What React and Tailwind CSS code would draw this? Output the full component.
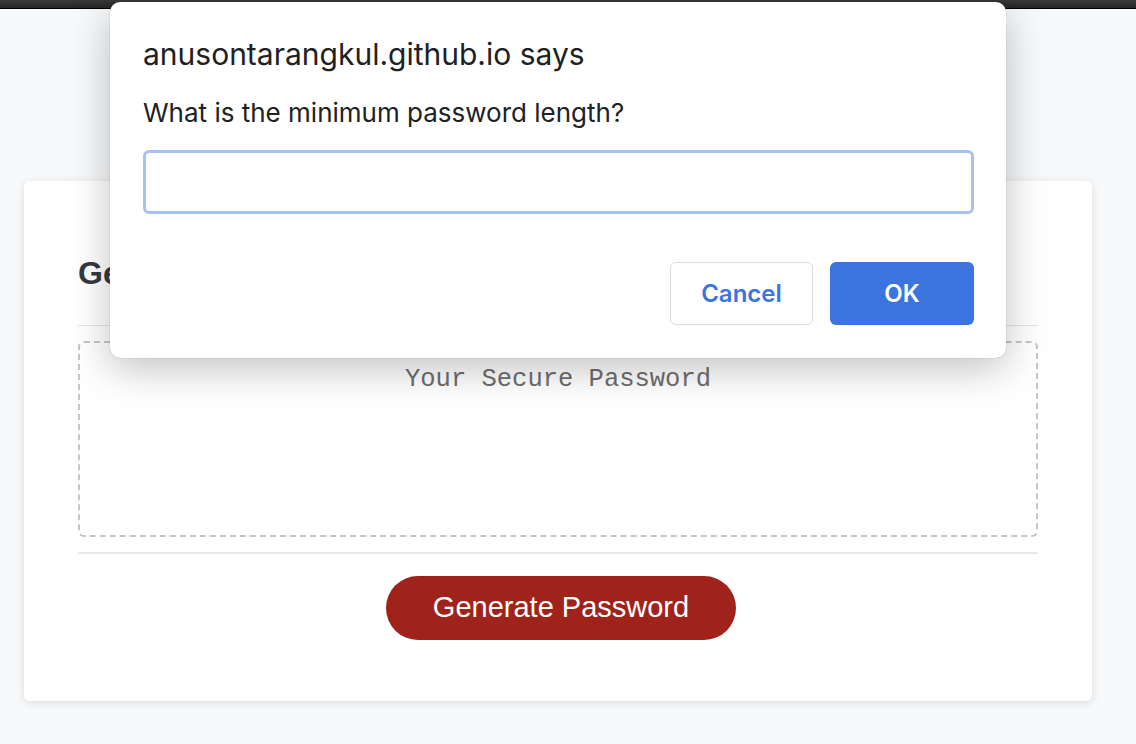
export default function App() {
  return (
    <div className="relative h-[744px] w-[1136px] overflow-hidden bg-[#f8f9fa] font-['Liberation_Sans',sans-serif]">
      {/* browser chrome strip */}
      <div className="h-[9px] bg-gradient-to-b from-[#3a3a3a] to-[#262626] border-b border-black" />

      {/* page */}
      <div className="px-[24px] pt-[172px]">
        <div className="w-[1068px] rounded-md bg-white shadow-[0_2px_10px_rgba(0,0,0,0.12)]">
          <div className="mx-[54px] border-b border-[#e4e4e4] pt-[72px] pb-[32px]">
            <h2 className="text-[32px] font-bold leading-[40px] text-[#343a40]">Generate a Password</h2>
          </div>
          <div className="mx-[54px] border-b-2 border-[#e8e8e8] py-[15px]">
            <div className="flex h-[196px] justify-center rounded-md border-2 border-dashed border-[#c3c7cc] pt-[25px]">
              <span className="font-['Liberation_Mono',monospace] text-[25.5px] leading-[24px] text-[#6e6e6e]">
                Your Secure Password
              </span>
            </div>
          </div>
          <div className="flex justify-center pl-[6px] pt-[22px] pb-[61px]">
            <button className="h-[64px] w-[350px] rounded-full bg-[#9f231b] text-[29px] text-white">
              Generate Password
            </button>
          </div>
        </div>
      </div>

      {/* browser prompt dialog */}
      <div className="absolute left-[110px] top-[2px] w-[896px] rounded-[10px] bg-white pl-[33px] pr-[32px] pt-[34px] pb-[33px] font-['Inter',sans-serif] text-[#202124] shadow-[0_10px_40px_rgba(0,0,0,0.25),0_0_1px_rgba(0,0,0,0.4)]">
        <div className="text-[30px] leading-[36px]">anusontarangkul.github.io says</div>
        <div className="mt-[25px] text-[26px] leading-[32px]">What is the minimum password length?</div>
        <div className="mt-[21px] h-[64px] rounded-[6px] border-[3px] border-[#a7c1f2]" />
        <div className="mt-[48px] flex justify-end gap-[17px]">
          <button className="h-[63px] w-[143px] rounded-[6px] border border-[#dadce0] text-[24px] font-semibold text-[#3b73df]">
            Cancel
          </button>
          <button className="h-[63px] w-[144px] rounded-[6px] bg-[#3b74df] text-[24px] font-semibold text-white">
            OK
          </button>
        </div>
      </div>
    </div>
  );
}
